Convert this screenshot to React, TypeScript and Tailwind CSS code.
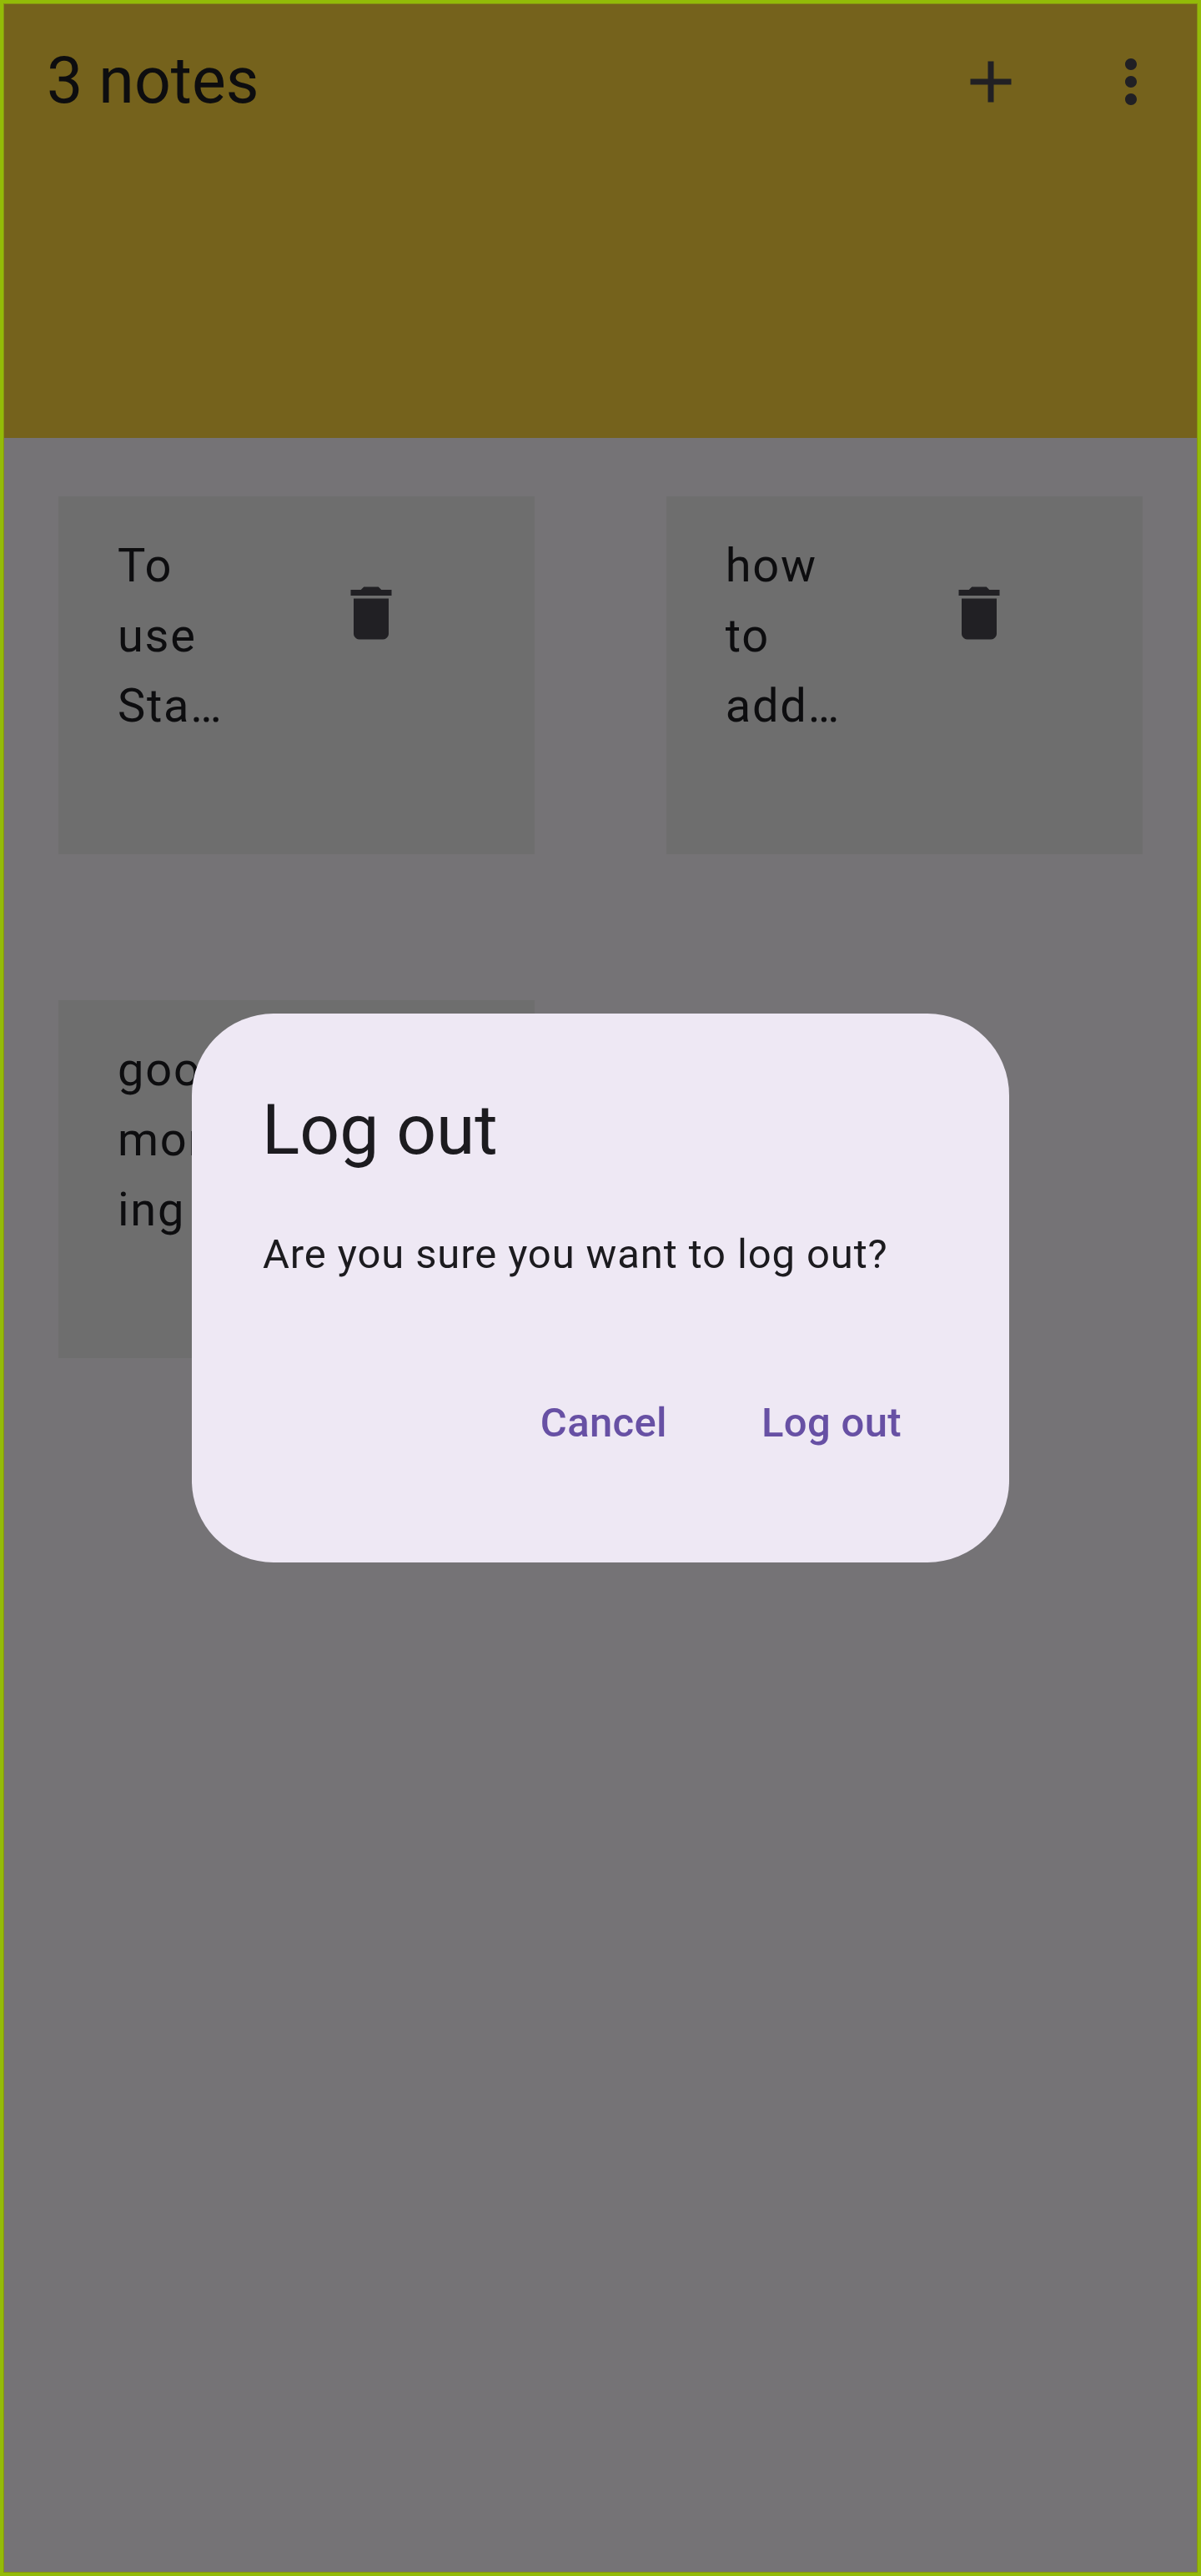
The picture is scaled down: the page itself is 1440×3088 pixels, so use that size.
const ICONS = {
  add: "M19 13h-6v6h-2v-6H5v-2h6V5h2v6h6v2z",
  more: "M12 8c1.1 0 2-.9 2-2s-.9-2-2-2-2 .9-2 2 .9 2 2 2zm0 2c-1.1 0-2 .9-2 2s.9 2 2 2 2-.9 2-2-.9-2-2-2zm0 6c-1.1 0-2 .9-2 2s.9 2 2 2 2-.9 2-2-.9-2-2-2z",
  trash: "M6 19c0 1.1.9 2 2 2h8c1.1 0 2-.9 2-2V7H6v12zM19 4h-3.5l-1-1h-5l-1 1H5v2h14V4z",
};

function Icon({ name }: { name: keyof typeof ICONS }) {
  return (
    <svg viewBox="0 0 24 24" className="size-[84px] shrink-0 fill-[#212024]" aria-hidden="true">
      <path d={ICONS[name]} />
    </svg>
  );
}

const notes = [
  ["To", "use", "Sta…"],
  ["how", "to", "add…"],
  ["good", "morn", "ing"],
];

function NoteCard({ lines }: { lines: string[] }) {
  return (
    <article className="flex h-[429px] items-start bg-[#6e6e6e] pt-[41px] pl-[71px]">
      <div className="w-[262px] text-[56px] leading-[84px] tracking-[1.75px]">
        {lines.map((line) => (
          <p key={line}>{line}</p>
        ))}
      </div>
      <button aria-label="Delete note" className="mt-[57px]">
        <Icon name="trash" />
      </button>
    </article>
  );
}

function LogoutDialog() {
  return (
    <div role="dialog" className="flex h-[658px] w-[980px] flex-col rounded-[98px] bg-[#eee8f4] px-[84px] pt-[84px] text-[#1c1b1f]">
      <h2 className="text-[84px] leading-[112px]">Log out</h2>
      <p className="mt-[58px] pl-px text-[49px] leading-[70px] tracking-[0.875px]">
        Are you sure you want to log out?
      </p>
      <div className="mt-[97px] mr-[3px] flex justify-end gap-[29px] text-[49px] leading-[140px] font-[540] tracking-[0.35px] text-[#6750a4]">
        <button className="px-[42px]">Cancel</button>
        <button className="px-[42px]">Log out</button>
      </div>
    </div>
  );
}

export default function App() {
  return (
    <div className="relative h-[3088px] w-[1440px] overflow-hidden bg-[#757376] font-['Roboto',sans-serif] text-[#0d0d0f]">
      <header className="flex h-[525px] items-start justify-between bg-[#75621c] pr-[42px] pl-14">
        <h1 className="text-[77px] leading-[194px]">3 notes</h1>
        <div className="flex h-[196px] items-center gap-[84px]">
          <button aria-label="Add note">
            <Icon name="add" />
          </button>
          <button aria-label="More options">
            <Icon name="more" />
          </button>
        </div>
      </header>
      <main className="grid grid-cols-2 gap-x-[157.5px] gap-y-[175px] p-[70px]">
        {notes.map((lines) => (
          <NoteCard key={lines[0]} lines={lines} />
        ))}
      </main>
      <div className="absolute inset-0 flex items-center justify-center">
        <LogoutDialog />
      </div>
      <div className="pointer-events-none absolute inset-0 border-4 border-[#93bb08]">
        <div className="size-full border border-[#869312]" />
      </div>
    </div>
  );
}
